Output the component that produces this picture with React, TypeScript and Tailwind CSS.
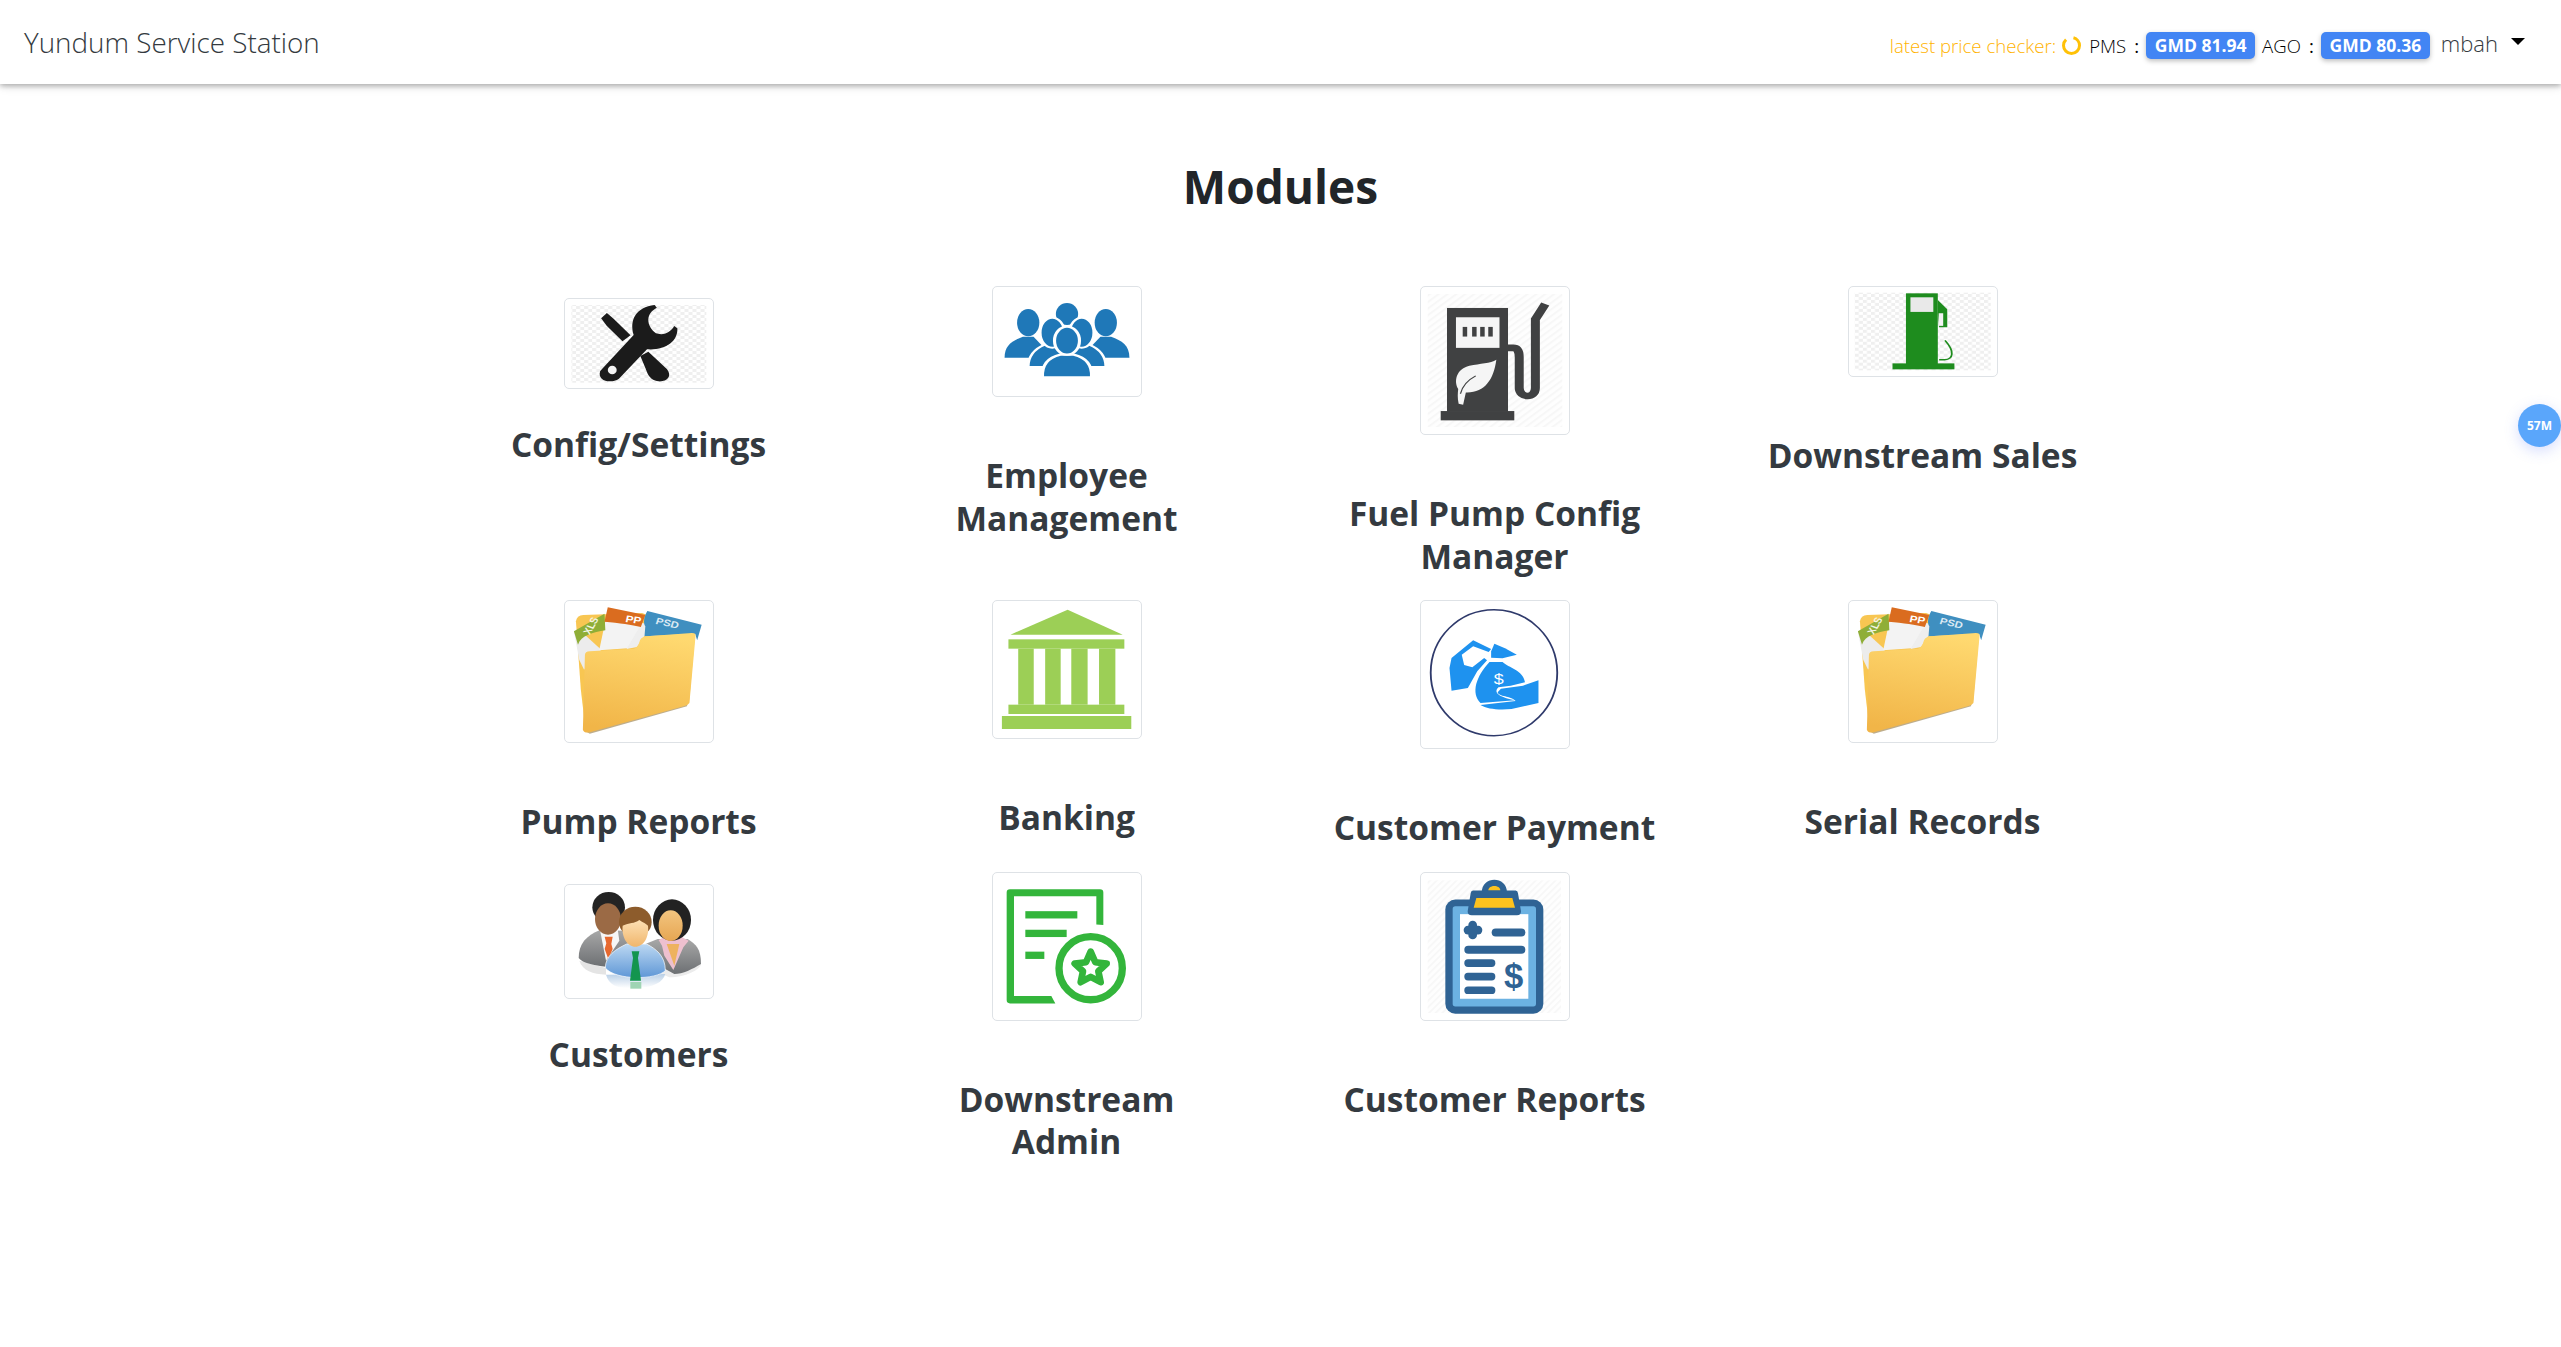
import React from "react";

function Ico({ vb, w = 140, h, children }: { vb: string; w?: number; h: number; children: React.ReactNode }) {
  return (
    <svg className="block" width={w} height={h} viewBox={vb} preserveAspectRatio="none">
      {children}
    </svg>
  );
}

function Checker({ x, y, w, h, id }: { x: number; y: number; w: number; h: number; id: string }) {
  return (
    <>
      <defs>
        <pattern id={id} width="18" height="18" patternUnits="userSpaceOnUse">
          <rect width="18" height="18" fill="#ffffff" />
          <rect width="9" height="9" fill="#efefef" />
          <rect x="9" y="9" width="9" height="9" fill="#efefef" />
        </pattern>
      </defs>
      <rect x={x} y={y} width={w} height={h} fill={`url(#${id})`} />
    </>
  );
}

function Hatch({ x, y, w, h, id }: { x: number; y: number; w: number; h: number; id: string }) {
  return (
    <>
      <defs>
        <pattern id={id} width="14" height="14" patternUnits="userSpaceOnUse" patternTransform="rotate(45)">
          <rect width="14" height="14" fill="#fefefe" />
          <rect width="5" height="14" fill="#f7f7f7" />
        </pattern>
      </defs>
      <rect x={x} y={y} width={w} height={h} fill={`url(#${id})`} />
    </>
  );
}

const ConfigIcon = () => (
  <Ico vb="200 99 314 243" h={81}>
    <Checker x={205} y={105} w={303} h={233} id="chk1" />
    <g fill="#1b1b1b">
      <path d="M272 145 L285 129 L300 146 L338 196 L320 214 L285 168 Z" />
      <path d="M360 258 L378 245 L420 298 C432 320 420 336 400 334 C385 330 378 320 372 296 Z" />
      <path d="M272 300 L345 195 C335 150 350 112 392 105 L397 113 C372 130 372 165 395 190 C415 198 428 185 436 168 L443 175 C445 215 415 242 375 238 L312 326 C295 342 262 334 270 303 Z" />
    </g>
    <ellipse cx="297" cy="300" rx="10" ry="13" fill="#f4f4f4" />
  </Ico>
);

const TeamIcon = () => {
  const c = "#1f78b8";
  return (
    <Ico vb="1158 63 314 303" h={101}>
      <g fill={c}>
        <ellipse cx="1228" cy="158" rx="25" ry="41" />
        <path d="M1175 263 C1175 225 1192 212 1216 200 L1240 200 L1285 263 Z" />
        <ellipse cx="1402" cy="158" rx="25" ry="41" />
        <path d="M1455 263 C1455 225 1438 212 1414 200 L1390 200 L1345 263 Z" />
        <ellipse cx="1315" cy="132" rx="25" ry="33" />
      </g>
      <g fill={c} stroke="#fff" strokeWidth="6">
        <path d="M1228 291 C1228 258 1240 238 1265 224 L1310 224 L1310 291 Z" />
        <ellipse cx="1282" cy="188" rx="27" ry="45" />
        <path d="M1402 291 C1402 258 1390 238 1365 224 L1320 224 L1320 291 Z" />
        <ellipse cx="1348" cy="188" rx="27" ry="45" />
      </g>
      <g fill={c} stroke="#fff" strokeWidth="7">
        <path d="M1260 322 C1258 282 1275 262 1300 254 L1330 254 C1355 262 1372 282 1370 322 Z" />
        <ellipse cx="1315" cy="212" rx="28" ry="42" />
      </g>
    </Ico>
  );
};

const FuelIcon = () => (
  <Ico vb="99 63 312 418" h={139}>
    <Hatch x={105} y={72} w={300} h={400} id="hatch1" />
    <rect x="148" y="114" width="136" height="312" fill="#404142" />
    <rect x="134" y="424" width="164" height="28" fill="#404142" />
    <rect x="168" y="142" width="97" height="92" fill="#f5f5f5" />
    <g fill="#404142">
      <rect x="183" y="171" width="10" height="29" />
      <rect x="204" y="171" width="10" height="29" />
      <rect x="222" y="171" width="10" height="29" />
      <rect x="240" y="171" width="10" height="29" />
    </g>
    <path d="M258 270 C252 330 232 370 190 368 L184 405 L174 402 C171 385 172 370 173 358 C163 335 168 298 198 288 C222 281 245 282 258 270 Z" fill="#f5f5f5" />
    <path d="M178 372 C182 350 195 330 212 318" stroke="#404142" strokeWidth="3" fill="none" />
    <path d="M284 234 L296 234 C305 234 309 245 309 262 L309 355 C309 385 345 388 345 355 L345 148 L367 102" stroke="#404142" strokeWidth="20" fill="none" />
  </Ico>
);

const PumpIcon = () => (
  <Ico vb="1058 63 312 244" h={81}>
    <Checker x={1062} y={68} w={303} h={234} id="chk2" />
    <g fill="#1e8c1e">
      <rect x="1176" y="70" width="71" height="215" />
      <rect x="1146" y="281" width="138" height="18" />
      <path d="M1247 90 L1268 118 L1268 172 L1250 172 L1247 130 Z" />
    </g>
    <rect x="1186" y="82" width="51" height="44" fill="#e9e9e9" />
    <rect x="1249" y="130" width="10" height="38" fill="#f2f2f2" />
    <path d="M1263 212 C1285 245 1282 268 1262 270 L1250 270" stroke="#1e8c1e" strokeWidth="4" fill="none" />
  </Ico>
);

const FolderIcon = () => (
  <Ico vb="71 46 343 399" h={133}>
    <defs>
      <linearGradient id="folderFront" x1="0.6" y1="0" x2="0.4" y2="1">
        <stop offset="0" stopColor="#ffd970" />
        <stop offset="1" stopColor="#f1b548" />
      </linearGradient>
    </defs>
    <path d="M88 95 Q90 77 106 76 L250 70 L380 130 L365 340 L112 425 L100 300 Z" fill="#f8c652" />
    <path d="M83 125 L96 210 L108 240 L150 180 L105 130 Z" fill="#ececec" />
    <path d="M160 95 L145 182 L215 176 L250 105 Z" fill="#f3f3f3" />
    <path d="M250 100 L212 178 L238 172 L255 140 L380 130 L388 130 Z" fill="#eeeeee" />
    <path d="M83 125 L158 72 L160 122 C130 128 100 138 93 165 Z" fill="#8fae37" />
    <path d="M166 53 L258 76 L247 112 C225 105 195 100 158 96 Z" fill="#da6c1f" />
    <path d="M263 64 L396 105 L385 152 L380 132 L256 140 L258 110 C252 100 255 80 263 64 Z" fill="#3f8fc0" />
    <text x="122" y="136" fontSize="27" fontWeight="700" fill="#f2f5e4" fontFamily="'Liberation Sans',sans-serif" transform="rotate(-65 122 136)">XLS</text>
    <text x="208" y="97" fontSize="29" fontWeight="700" fill="#fff" fontFamily="'Liberation Sans',sans-serif" transform="rotate(10 208 97)">PP</text>
    <text x="282" y="102" fontSize="28" fontWeight="700" fill="#dbe9f3" fontFamily="'Liberation Sans',sans-serif" transform="rotate(15 282 102)">PSD</text>
    <path d="M105 420 L122 432 L360 350 L362 340 Z" fill="#a38a5a" opacity="0.7" />
    <path d="M110 196 Q110 186 122 185 L230 177 Q240 174 245 152 Q249 141 262 140 L372 130 Q382 130 381 140 L366 340 Q362 347 352 350 L122 428 Q108 431 105 420 Z" fill="url(#folderFront)" />
  </Ico>
);

const BankIcon = () => (
  <Ico vb="1120 46 343 387" h={129}>
    <g fill="#9ccf56">
      <path d="M1293 60 L1428 135 L1153 135 Z" />
      <rect x="1148" y="149" width="284" height="28" />
      <rect x="1172" y="177" width="38" height="168" />
      <rect x="1238" y="177" width="38" height="168" />
      <rect x="1302" y="177" width="40" height="168" />
      <rect x="1370" y="177" width="40" height="168" />
      <rect x="1148" y="345" width="284" height="28" />
      <rect x="1132" y="379" width="317" height="39" />
    </g>
  </Ico>
);

const PaymentIcon = () => (
  <Ico vb="60 46 343 417" h={139}>
    <ellipse cx="229" cy="249" rx="155" ry="189" fill="#fff" stroke="#2f3a6b" strokeWidth="4.5" />
    <g fill="#1e92ef">
      <path d="M120 235 L125 205 L178 152 L222 178 L216 187 L178 170 L150 195 L156 226 L176 233 L205 205 L212 212 L188 245 L165 295 L125 303 Z" />
      <path d="M222 185 L230 162 L256 176 L285 195 L250 206 L222 204 Z" />
      <path d="M218 217 L250 217 C265 235 300 240 305 278 L270 288 L240 293 C230 305 232 320 280 332 L196 340 C172 310 185 260 218 217 Z" />
      <path d="M196 346 L282 334 C270 318 240 322 238 308 L246 297 L300 288 L338 272 L338 340 L272 358 C240 362 212 358 196 346 Z" />
    </g>
    <text x="241" y="282" textAnchor="middle" fontSize="44" fill="#fff" fontFamily="'Liberation Sans',sans-serif">$</text>
  </Ico>
);

const PeopleIcon = () => (
  <Ico vb="29 25 420 315" h={105}>
    <defs>
      <linearGradient id="suit" x1="0" y1="0" x2="0" y2="1">
        <stop offset="0" stopColor="#a8a8a8" />
        <stop offset="1" stopColor="#6d7073" />
      </linearGradient>
      <linearGradient id="shirt" x1="0" y1="0" x2="0" y2="1">
        <stop offset="0" stopColor="#bcd8f2" />
        <stop offset="1" stopColor="#5f97d6" />
      </linearGradient>
      <linearGradient id="skin" x1="0" y1="0" x2="0" y2="1">
        <stop offset="0" stopColor="#fde0b4" />
        <stop offset="1" stopColor="#f0b66c" />
      </linearGradient>
      <linearGradient id="skin2" x1="0" y1="0" x2="0" y2="1">
        <stop offset="0" stopColor="#f3c57f" />
        <stop offset="1" stopColor="#e6a653" />
      </linearGradient>
      <linearGradient id="fade" x1="0" y1="0" x2="0" y2="1">
        <stop offset="0" stopColor="#b9cfe6" />
        <stop offset="1" stopColor="#ffffff" />
      </linearGradient>
    </defs>
    <path d="M60 240 L140 262 L140 282 C100 280 70 270 60 240 Z" fill="#e4e4e4" />
    <path d="M270 265 L425 250 C425 265 380 290 330 290 Z" fill="#ececec" />
    <path d="M58 232 C58 190 80 165 122 148 L195 150 L210 205 L140 258 C105 254 70 248 58 232 Z" fill="url(#suit)" />
    <path d="M122 148 L175 145 L180 180 L140 240 Z" fill="#f6f6f6" />
    <path d="M136 168 L160 168 L156 190 L160 205 L147 235 L136 205 L141 188 Z" fill="#e7692f" />
    <ellipse cx="148" cy="80" rx="49" ry="46" fill="#232323" />
    <ellipse cx="146" cy="115" rx="39" ry="47" fill="#9b6a45" />
    <path d="M258 190 L295 175 L385 175 C410 190 425 205 425 250 C400 265 370 280 345 280 L300 255 Z" fill="url(#suit)" />
    <path d="M298 178 L322 165 L360 165 L388 180 L372 200 L342 268 L315 225 L308 195 Z" fill="#eec0cf" />
    <path d="M322 190 L360 190 L345 255 Z" fill="#eeb25f" />
    <ellipse cx="338" cy="118" rx="57" ry="62" fill="#222" />
    <ellipse cx="334" cy="135" rx="36" ry="46" fill="url(#skin2)" />
    <path d="M140 282 C150 315 175 325 230 322 C285 320 310 305 318 280 Z" fill="url(#fade)" />
    <path d="M138 262 C138 225 170 205 202 190 L262 190 C290 205 318 225 318 270 C290 298 170 300 138 262 Z" fill="url(#shirt)" stroke="#fff" strokeWidth="2" />
    <path d="M217 212 L240 212 L236 232 L245 300 L212 300 L221 232 Z" fill="#13954f" />
    <ellipse cx="228" cy="124" rx="49" ry="46" fill="#8d5c2c" />
    <path d="M190 135 C210 125 225 130 240 118 C250 125 262 130 266 135 C270 170 252 198 228 198 C205 198 186 170 190 135 Z" fill="url(#skin)" />
    <rect x="213" y="304" width="33" height="20" fill="#9fd4b4" />
  </Ico>
);

const AdminIcon = () => (
  <Ico vb="29 25 420 419" h={139}>
    <g fill="#33b53b">
      <path d="M58 72 Q58 62 68 62 L338 62 Q348 62 348 72 L348 170 L327 168 L327 83 L80 83 L80 384 L192 384 L204 406 L68 406 Q58 406 58 396 Z" />
      <rect x="114" y="128" width="156" height="22" />
      <rect x="114" y="184" width="124" height="22" />
      <rect x="114" y="250" width="57" height="22" />
    </g>
    <circle cx="310" cy="300" r="95" fill="#fff" stroke="#33b53b" strokeWidth="22" />
    <path d="M310 250 L324 282 L358 286 L333 309 L340 342 L310 326 L280 342 L287 309 L262 286 L296 282 Z" fill="#fff" stroke="#33b53b" strokeWidth="20" strokeLinejoin="round" />
  </Ico>
);

const ReportIcon = () => (
  <Ico vb="32 25 420 419" h={139}>
    <Hatch x={40} y={35} w={400} h={400} id="hatch2" />
    <rect x="93" y="93" width="294" height="344" rx="30" fill="#2f6394" />
    <rect x="115" y="113" width="250" height="302" rx="8" fill="#6cb2e2" />
    <rect x="137" y="137" width="205" height="255" fill="#fff" />
    <path d="M202 72 C202 20 278 20 278 72 Z" fill="#2f6394" />
    <path d="M222 66 C222 48 258 48 258 66 Z" fill="#fdc21e" />
    <path d="M176 66 L304 66 Q310 66 311 74 L320 128 Q320 140 308 140 L172 140 Q160 140 160 128 L169 74 Q170 66 176 66 Z" fill="#2f6394" />
    <path d="M186 88 L294 88 L302 118 L178 118 Z" fill="#fdc21e" />
    <g fill="#2f6394">
      <rect x="148" y="172" width="56" height="26" rx="13" />
      <rect x="162" y="157" width="26" height="56" rx="13" />
      <rect x="232" y="180" width="101" height="24" rx="12" />
      <rect x="150" y="232" width="183" height="24" rx="12" />
      <rect x="150" y="273" width="93" height="23" rx="11" />
      <rect x="150" y="314" width="93" height="23" rx="11" />
      <rect x="150" y="355" width="93" height="23" rx="11" />
    </g>
    <text x="298" y="359" textAnchor="middle" fontSize="104" fontWeight="700" fill="#2f6394" fontFamily="'Liberation Sans',sans-serif">$</text>
  </Ico>
);

type Mod = { icon: React.ReactNode; lines: string[]; top?: boolean };

const modules: Mod[] = [
  { icon: <ConfigIcon />, lines: ["Config/Settings"], top: true },
  { icon: <TeamIcon />, lines: ["Employee", "Management"] },
  { icon: <FuelIcon />, lines: ["Fuel Pump Config", "Manager"] },
  { icon: <PumpIcon />, lines: ["Downstream Sales"] },
  { icon: <FolderIcon />, lines: ["Pump Reports"] },
  { icon: <BankIcon />, lines: ["Banking"] },
  { icon: <PaymentIcon />, lines: ["Customer Payment"] },
  { icon: <FolderIcon />, lines: ["Serial Records"] },
  { icon: <PeopleIcon />, lines: ["Customers"], top: true },
  { icon: <AdminIcon />, lines: ["Downstream", "Admin"] },
  { icon: <ReportIcon />, lines: ["Customer Reports"] },
];

function Card({ m }: { m: Mod }) {
  return (
    <div className={m.top ? "flex flex-col items-center pt-3 pb-[23px]" : "flex flex-col items-center pb-[23px]"}>
      <div className="w-[150px] p-1 bg-white border border-[#dee2e6] rounded-[5px]">{m.icon}</div>
      <h3 className={`${m.top ? "mt-[34px]" : "mt-[57px]"} text-center text-[33.5px] leading-[42.5px] font-bold text-[#343a40]`}>
        {m.lines.map((l) => (
          <div key={l}>{l}</div>
        ))}
      </h3>
    </div>
  );
}

function Badge({ children }: { children: React.ReactNode }) {
  return (
    <span className="h-[27px] w-[109px] flex items-center justify-center rounded-[5px] bg-[#4285f4] text-white text-[17.5px] font-bold shadow-[0_2px_5px_rgba(0,0,0,0.26)]">
      {children}
    </span>
  );
}

export default function App() {
  return (
    <div className="relative min-h-[1347px] bg-white overflow-hidden font-['Open_Sans',sans-serif]">
      <nav className="h-[84px] flex items-center justify-between pl-6 pr-9 bg-white shadow-[0_2px_5px_rgba(0,0,0,0.26),0_2px_10px_rgba(0,0,0,0.12)]">
        <div className="mt-[2px] text-[27.8px] font-light text-[#343a40]">Yundum Service Station</div>
        <div className="mt-[7px] flex items-center text-[18.6px]">
          <span className="font-light text-[#ffb300]">latest price checker:</span>
          <svg className="ml-[6px]" width="19" height="19" viewBox="0 0 19 19">
            <circle cx="9.5" cy="9.5" r="8" fill="none" stroke="#ffc107" strokeWidth="3" strokeDasharray="42 8.3" strokeDashoffset="-2" transform="rotate(-90 9.5 9.5)" />
          </svg>
          <span className="ml-2 text-black font-light">PMS</span>
          <span className="ml-[8px] mr-[7px] text-black">:</span>
          <Badge>GMD 81.94</Badge>
          <span className="ml-[7px] text-black font-light">AGO</span>
          <span className="ml-[8px] mr-[7px] text-black">:</span>
          <Badge>GMD 80.36</Badge>
          <span className="ml-[11px] mb-[4px] text-[22px] font-light text-[#343a40]">mbah</span>
          <span className="ml-[13px] mb-[9px] w-0 h-0 border-x-[7px] border-x-transparent border-t-[7px] border-t-black" />
        </div>
      </nav>
      <h1 className="mt-[73px] mb-[71px] text-center text-[46px] leading-[58px] font-bold text-[#212529]">Modules</h1>
      <div className="grid grid-cols-4 w-[1712px] mx-auto">
        {modules.map((m) => (
          <Card key={m.lines.join(" ")} m={m} />
        ))}
      </div>
      <div className="absolute right-0 top-[404px] w-[43px] h-[43px] rounded-full bg-[#5aa6fb] flex items-center justify-center text-white text-[12px] font-bold shadow-[0_4px_14px_rgba(90,120,250,0.25)]">
        57M
      </div>
    </div>
  );
}
